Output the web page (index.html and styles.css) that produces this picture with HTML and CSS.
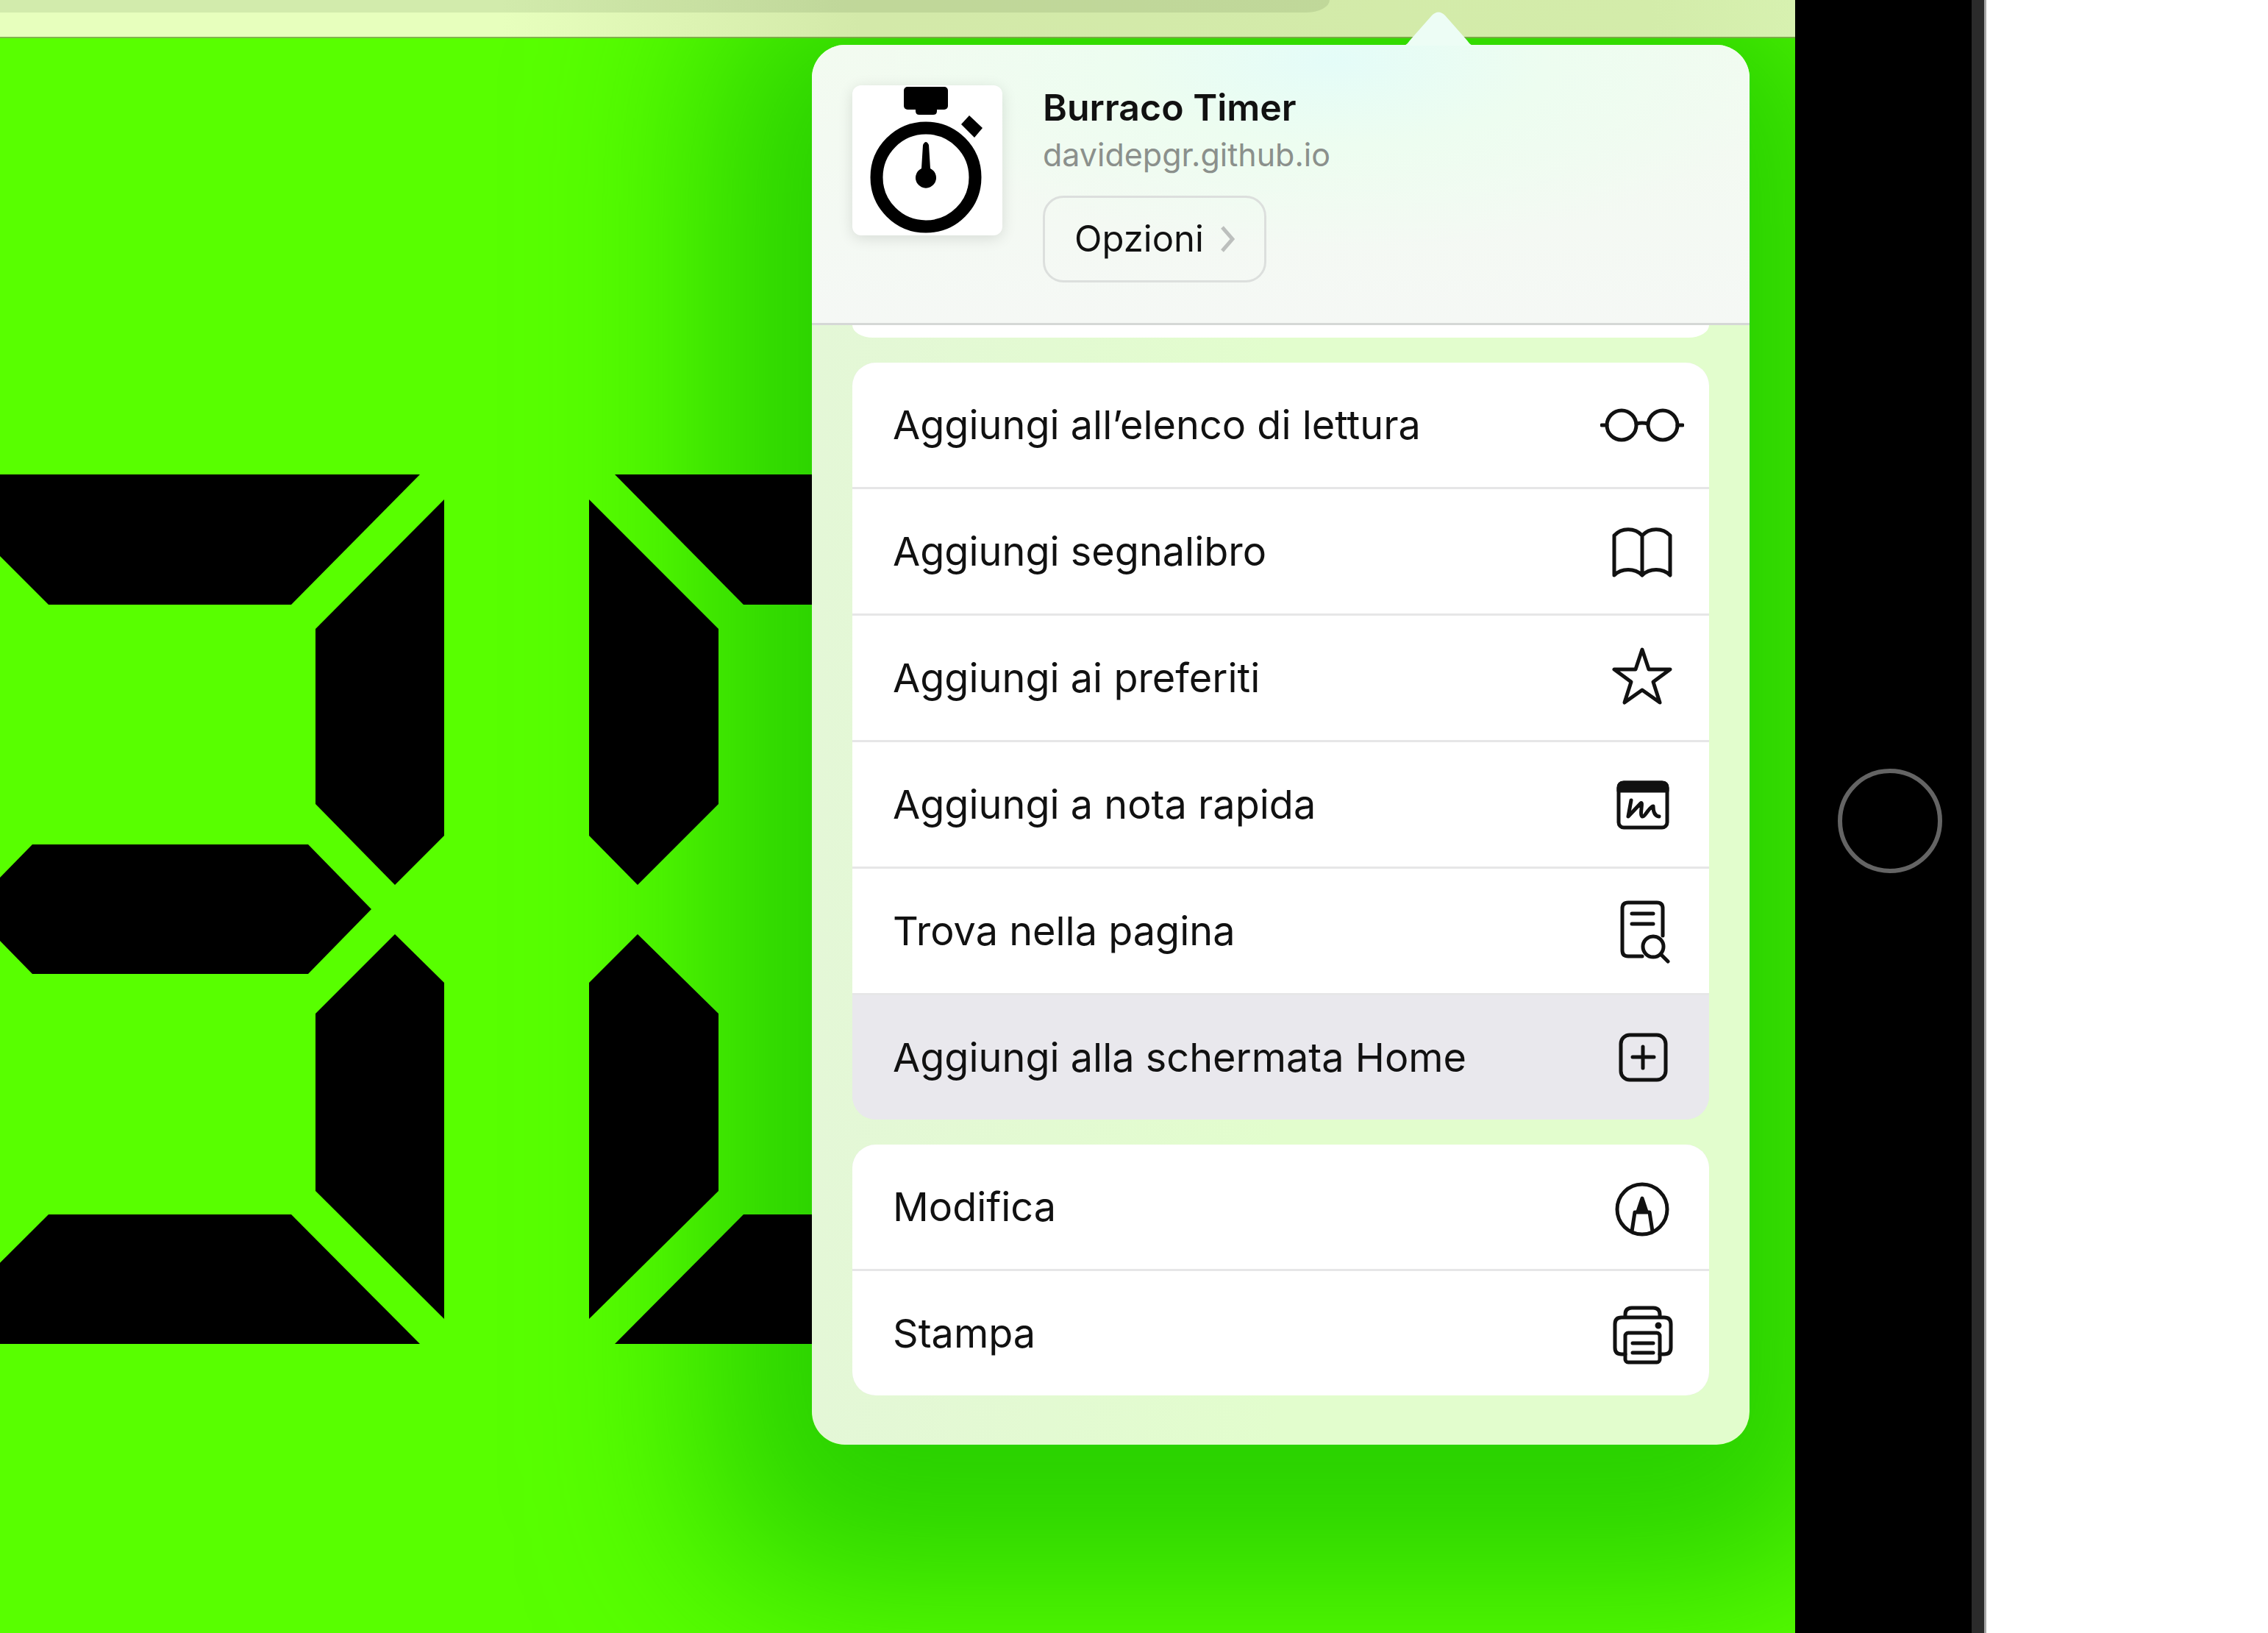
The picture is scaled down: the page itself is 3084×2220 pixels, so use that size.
FILE: index.html
```html
<!DOCTYPE html>
<html lang="it">
<head>
<meta charset="utf-8">
<title>Burraco Timer</title>
<link rel="stylesheet" href="styles.css">
</head>
<body>
<div class="device">
  <main class="screen">
    <div class="toolbar"><div class="address"></div></div>
    <div class="shade"></div>
    <svg class="digits" viewBox="0 0 1400 1182" aria-label="Timer">
      <path d="M-111 0H571L396 177H66Z"/>
      <path d="M604 34V491L537 558L429 448V210Z"/>
      <path d="M44 503H419L505 591L419 679H44L-42 591Z"/>
      <path d="M537 625L604 691V1148L429 974V733Z"/>
      <path d="M66 1006H396L571 1182H-111Z"/>
      <path d="M836 0H1400V177H1011Z"/>
      <path d="M801 34V491L867 558L977 448V210Z"/>
      <path d="M867 625L801 691V1148L977 974V733Z"/>
      <path d="M1011 1006H1400V1182H836Z"/>
    </svg>
    <section class="popover">
      <svg class="arrow" viewBox="0 0 92 46"><path d="M0 46Q4 44 7 39L37 5Q46-4 55 5L85 39Q88 44 92 46Z"/></svg>
      <header class="head">
        <svg class="site-icon" viewBox="0 0 204 204">
          <rect x="70" y="2" width="60" height="31" rx="5"/>
          <path d="M86 30H115V35Q115 40 110 40H91Q86 40 86 35Z"/>
          <path d="M148 53L159 41L177 58L166 71Z"/>
          <circle cx="100" cy="125" r="67" fill="none" stroke="#000" stroke-width="17"/>
          <path d="M96 81Q100 73 104 81L106 113A14 14 0 1 1 94 113Z"/>
        </svg>
        <div class="about">
          <h1>Burraco Timer</h1>
          <p>davidepgr.github.io</p>
          <button class="options" type="button">Opzioni
            <svg viewBox="0 0 20 36"><path d="M3 2L17 18L3 34"/></svg>
          </button>
        </div>
      </header>
      <div class="list">
        <div class="card-end"></div>
        <div class="card">
          <button type="button" class="row">Aggiungi all’elenco di lettura
            <svg class="icon" viewBox="0 0 114 90"><circle cx="29" cy="45" r="20"/><circle cx="85" cy="45" r="20"/><path d="M2 45H9M105 45H112M49 43Q57 41 65 43"/></svg></button>
          <button type="button" class="row">Aggiungi segnalibro
            <svg class="icon" viewBox="0 0 114 90"><path d="M57 23C47 12 29 12 19 23V77C29 67 47 67 57 77C67 67 85 67 95 77V23C85 12 67 12 57 23V77"/></svg></button>
          <button type="button" class="row">Aggiungi ai preferiti
            <svg class="icon" viewBox="0 0 114 90"><path d="M57 6L66 33H95L72 50L81 78L57 61L33 78L42 50L19 33H48Z"/></svg></button>
          <button type="button" class="row">Aggiungi a nota rapida
            <svg class="icon" viewBox="0 0 114 90"><rect x="25" y="15" width="66" height="61" rx="7"/><path class="solid" d="M25 26V22Q25 15 32 15H84Q91 15 91 22V26Z"/><path d="M42 39L38 61L55 43C59 39 53 59 57 61C61 62 67 47 72 47Q72 60 80 61"/></svg></button>
          <button type="button" class="row">Trova nella pagina
            <svg class="icon" viewBox="0 0 114 90"><path d="M57 79H38Q30 79 30 71V14Q30 6 38 6H77Q85 6 85 14V51M43 21H72M43 35H72M82 76L92 86"/><circle cx="72" cy="66" r="14"/></svg></button>
          <button type="button" class="row pressed">Aggiungi alla schermata Home
            <svg class="icon" viewBox="0 0 114 90"><rect x="28" y="14" width="61" height="61" rx="12"/><path d="M58 30V59M44 44H73"/></svg></button>
        </div>
        <div class="card">
          <button type="button" class="row">Modifica
            <svg class="icon" viewBox="0 0 114 90"><circle cx="57" cy="48" r="34"/><path d="M43 78L47 52H67L71 78"/><path class="solid" d="M57 33L63 51H51Z"/></svg></button>
          <button type="button" class="row">Stampa
            <svg class="icon" viewBox="0 0 114 90"><path d="M34 22V19Q34 10 43 10H72Q81 10 81 19V22M34 73H29Q20 73 20 64V32Q20 23 29 23H87Q96 23 96 32V64Q96 73 87 73H81"/><rect x="34" y="44" width="47" height="40" rx="4"/><path d="M44 58H72M44 71H72"/><circle class="solid" cx="79" cy="34" r="2"/></svg></button>
        </div>
      </div>
    </section>
  </main>
  <aside class="bezel"><div class="home"></div></aside>
</div>
</body>
</html>
```
FILE: styles.css
```css
* { box-sizing: border-box; }
body { margin: 0; background: #fff; font-family: Inter, "Liberation Sans", sans-serif; color: #111; }
.device { display: flex; min-height: 100vh; padding-right: 383px; }
.screen { position: relative; flex: 1; overflow: hidden; background: #58ff00; }
.toolbar { position: relative; z-index: 1; height: 52px; background: linear-gradient(90deg, #e7ffbd 28%, #d3e9a9 48%, #d3ecaa 92%, #d7f1b0); border-bottom: 2px solid rgba(60, 130, 0, .6); }
.address { width: 1808px; max-width: 75%; height: 17px; background: rgba(0, 30, 0, .09); border-radius: 0 0 32px 0 / 0 0 17px 0; }
.shade { position: absolute; top: 61px; right: 62px; width: 1275px; height: 1903px; border-radius: 45px; box-shadow: 0 50px 240px 140px rgba(0, 168, 0, .54); }
.digits { position: relative; display: block; width: 1400px; height: 1182px; margin-top: 593px; }
.popover { position: absolute; z-index: 2; top: 61px; right: 62px; width: 1275px; border-radius: 45px; background: linear-gradient(90deg, #e4f7d7, #e2fdcd 50%); }
.arrow { position: absolute; top: -45px; right: 377px; width: 92px; height: 46px; fill: #edfdf5; }
.head { display: flex; gap: 55px; height: 381px; padding: 55px; border-bottom: 3px solid #d5d8d6; border-radius: 45px 45px 0 0; background: radial-gradient(ellipse 640px 260px at 710px 20px, #e4fcf8, #edfdf0 45%, #f5f9f400), linear-gradient(#f2fbf0, #f5f8f5); }
.site-icon { width: 204px; height: 204px; border-radius: 12px; background: #fff; box-shadow: 0 4px 20px rgba(0, 0, 0, .12); }
.about { display: flex; flex-direction: column; align-items: flex-start; }
h1 { margin: 0; font-size: 50px; line-height: 60px; font-weight: 600; }
p { margin: 0; font-size: 43px; line-height: 68px; color: #8b908c; }
button { font: inherit; color: inherit; text-align: left; }
.options { display: flex; align-items: center; gap: 22px; height: 120px; margin-top: 22px; padding: 0 40px; font-size: 49px; line-height: 60px; background: none; border: 3px solid #dcdfdd; border-radius: 28px; }
.options svg { width: 20px; height: 36px; fill: none; stroke: #bcbfbd; stroke-width: 5; }
.list { display: flex; flex-direction: column; padding: 0 55px 67px; }
.card-end { height: 17px; margin-bottom: 34px; background: #fff; border-radius: 0 0 28px 28px / 0 0 17px 17px; }
.card { display: flex; flex-direction: column; gap: 3px; overflow: hidden; border-radius: 32px; background: #e6e6e7; }
.card + .card { margin-top: 34px; }
.row { display: flex; align-items: center; justify-content: space-between; height: 169px; padding: 0 34px 0 55px; font-size: 54px; background: #fff; border: 0; }
.pressed { background: #e9e8ed; }
.icon { width: 114px; height: 90px; fill: none; stroke: #111; stroke-width: 5; stroke-linecap: round; stroke-linejoin: round; }
.icon .solid { fill: #111; }
.bezel { display: flex; justify-content: center; width: 260px; background: #000; border-right: 3px solid #a5a5a5; box-shadow: inset -17px 0 #2b2b2b; }
.home { width: 142px; height: 142px; margin-top: 1045px; border: 6px solid #646464; border-radius: 50%; }
```
